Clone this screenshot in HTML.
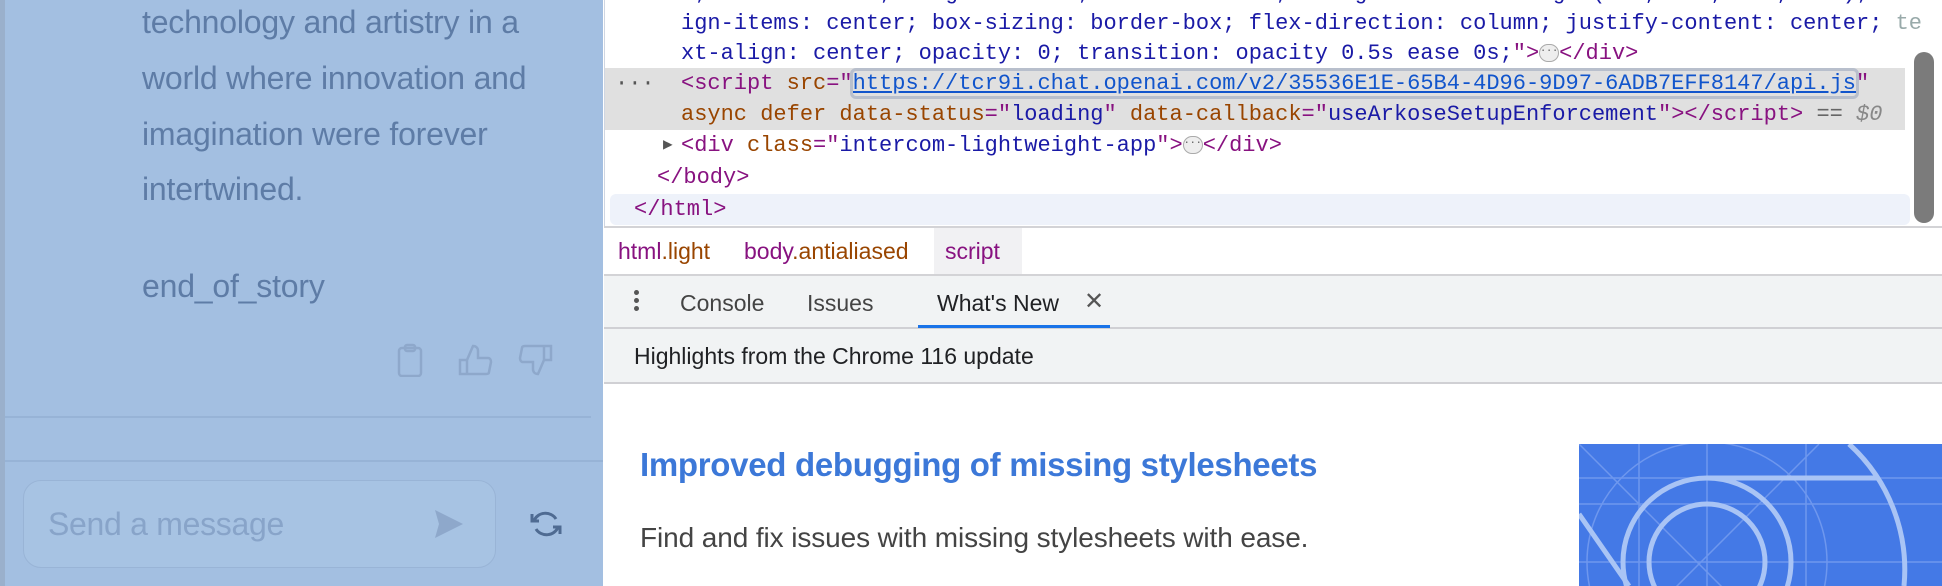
<!DOCTYPE html>
<html><head><meta charset="utf-8"><style>
*{margin:0;padding:0;box-sizing:border-box}
html,body{width:1942px;height:586px;overflow:hidden}
body{position:relative;background:#fff;font-family:"Liberation Sans",sans-serif}
.left{position:absolute;left:0;top:0;width:603px;height:586px;background:#a3bfe1;border-left:5px solid #9ab0cc;overflow:hidden}
.lt{position:absolute;left:142px;font-size:32px;color:#5e7ca6;letter-spacing:-0.2px;line-height:38px}
.code{position:absolute;left:604px;top:0;width:1338px;height:226px;background:#fff;border-left:1px solid #cfd6e2;font-family:"Liberation Mono",monospace;font-size:22px;white-space:pre;overflow:hidden}
.ln{position:absolute;height:31px;line-height:31px}
.t{color:#881280}.a{color:#994500}.v{color:#1a1aa6}.k{color:#1155cc;text-decoration:underline}
.dots{display:inline-block;width:20px;height:18px;border:1px solid #aaa;border-radius:9px;background:#eee;vertical-align:middle;font-size:10px;line-height:14px;text-align:center;color:#555}
.abs{position:absolute}
</style></head><body>
<div class="left">
<div class="lt" style="top:3px;left:137px">technology and artistry in a</div>
<div class="lt" style="top:59px;left:137px">world where innovation and</div>
<div class="lt" style="top:115px;left:137px">imagination were forever</div>
<div class="lt" style="top:170px;left:137px">intertwined.</div>
<div class="lt" style="top:267px;left:137px">end_of_story</div>
<svg class="abs" style="left:390px;top:343px" width="160" height="34" fill="none" stroke="#8ea8cb" stroke-width="2.5">
<rect x="4" y="5" width="22" height="28" rx="3"/><rect x="10" y="2" width="10" height="6" rx="2"/>
<path d="M65 17h7v14h-7zM72 17l6-14c3 0 5 2 5 5v7h10c2 0 3 2 3 4l-2 10c0 2-2 2-3 2H72"/>
<path d="M149 17h7V3h-7zM149 17l-6 14c-3 0-5-2-5-5v-7h-10c-2 0-3-2-3-4l2-10c0-2 2-2 3-2h19"/>
</svg>
<div class="abs" style="left:-5px;top:416px;width:591px;height:2px;background:#97b3d6"></div>
<div class="abs" style="left:-5px;top:460px;width:603px;height:2px;background:#97b3d6"></div>
<div class="abs" style="left:18px;top:480px;width:473px;height:88px;border:1px solid #99b4d6;border-radius:18px;background:#a7c3e3"></div>
<div class="abs" style="left:43px;top:506px;font-size:32px;color:#88a4c9;letter-spacing:-0.3px">Send a message</div>
<svg class="abs" style="left:428px;top:508px" width="32" height="32"><path d="M2 2L30 16L2 30L6 16Z" fill="#8ea8cb"/></svg>
<svg class="abs" style="left:524px;top:508px" width="34" height="32" fill="none" stroke="#4f6b92" stroke-width="3"><path d="M5 13a12 11 0 0 1 22-2M29 19a12 11 0 0 1-22 2M3 6v7h7M31 26v-7h-7"/></svg>
</div>
<div class="code">
<div class="ln" style="top:-22px;left:76px;color:#1a1aa6">x; width: 100vw; height: 100vh; z-index: 1000; background-color: rgba(255, 255, 255, 0.5); di</div>
<div class="ln" style="top:8px;left:76px;color:#1a1aa6">ign-items: center; box-sizing: border-box; flex-direction: column; justify-content: center; <span style="color:#9aa">te</span></div>
<div class="ln" style="top:38px;left:76px"><span class="v">xt-align: center; opacity: 0; transition: opacity 0.5s ease 0s;</span><span class="t">"&gt;</span><span class="dots">···</span><span class="t">&lt;/div&gt;</span></div>
<div class="abs" style="left:0;top:68px;width:1300px;height:62px;background:#e0e0e0"></div>
<div class="ln" style="top:68px;left:10px;color:#555">···</div>
<div class="ln" style="top:68px;left:76px"><span class="t">&lt;script</span> <span class="a">src</span><span class="t">="</span><span class="k" style="outline:3px solid #b8bfcc;border-radius:3px">https://tcr9i.chat.openai.com/v2/35536E1E-65B4-4D96-9D97-6ADB7EFF8147/api.js</span><span class="t">"</span></div>
<div class="ln" style="top:99px;left:76px"><span class="a">async defer data-status</span><span class="t">="</span><span class="v">loading</span><span class="t">"</span> <span class="a">data-callback</span><span class="t">="</span><span class="v">useArkoseSetupEnforcement</span><span class="t">"&gt;&lt;/script&gt;</span> <span style="color:#666">==</span> <i style="color:#888">$0</i></div>
<div class="ln" style="top:130px;left:58px;color:#555;font-size:16px">▶</div>
<div class="ln" style="top:130px;left:76px"><span class="t">&lt;div</span> <span class="a">class</span><span class="t">="</span><span class="v">intercom-lightweight-app</span><span class="t">"&gt;</span><span class="dots">···</span><span class="t">&lt;/div&gt;</span></div>
<div class="ln" style="top:162px;left:52px"><span class="t">&lt;/body&gt;</span></div>
<div class="abs" style="left:5px;top:194px;width:1300px;height:31px;background:#eef2fa;border-radius:6px"></div>
<div class="ln" style="top:194px;left:29px"><span class="t">&lt;/html&gt;</span></div>
<div class="abs" style="left:1309px;top:52px;width:20px;height:171px;background:#7b7b7b;border-radius:10px"></div>
</div>
<div class="abs" style="left:604px;top:226px;width:1338px;height:48px;border-top:2px solid #d3d3d6;background:#fff;font-size:23px;line-height:46px">
<span class="abs" style="left:14px;color:#881280">html<span style="color:#994500">.light</span></span>
<span class="abs" style="left:140px;color:#881280">body<span style="color:#994500">.antialiased</span></span>
<span class="abs" style="left:330px;width:88px;height:46px;background:#f1f1f3"></span>
<span class="abs" style="left:341px;color:#881280">script</span>
</div>
<div class="abs" style="left:604px;top:274px;width:1338px;height:55px;background:#f1f3f4;border-top:2px solid #d3d3d6;border-bottom:2px solid #d0d0d4;font-size:23px">
<div class="abs" style="left:30px;top:14px;width:5px;height:5px;border-radius:3px;background:#555;box-shadow:0 8px 0 #555,0 16px 0 #555"></div>
<span class="abs" style="left:76px;top:14px;color:#444">Console</span>
<span class="abs" style="left:203px;top:14px;color:#444">Issues</span>
<span class="abs" style="left:333px;top:14px;color:#202124">What's New</span>
<span class="abs" style="left:480px;top:11px;color:#555;font-size:24px">✕</span>
<div class="abs" style="left:314px;top:49px;width:192px;height:3px;background:#1a73e8"></div>
</div>
<div class="abs" style="left:604px;top:329px;width:1338px;height:55px;background:#f1f3f4;border-bottom:2px solid #d0d0d4">
<span class="abs" style="left:30px;top:14px;font-size:23px;color:#202124">Highlights from the Chrome 116 update</span>
</div>
<div class="abs" style="left:640px;top:446px;font-size:33px;font-weight:bold;color:#3c78d8;letter-spacing:-0.3px">Improved debugging of missing stylesheets</div>
<div class="abs" style="left:640px;top:522px;font-size:28px;color:#444;letter-spacing:-0.1px">Find and fix issues with missing stylesheets with ease.</div>
<svg class="abs" style="left:1579px;top:444px" width="363" height="142">
<rect width="363" height="142" fill="#4479e6"/>
<g stroke="#6e97ee" stroke-width="1.5" fill="none"><path d="M0 34H363M0 60H363M0 118H363M60 0V142M128 0V142M227 0V142"/><path d="M0 0L200 200M240 0L60 180"/><circle cx="128" cy="118" r="120"/></g>
<g stroke="#a9c4f5" stroke-width="5" fill="none"><circle cx="128" cy="118" r="58"/><circle cx="128" cy="118" r="84"/><path d="M128 34H300M270 0A170 170 0 0 1 325 142M0 70L50 142"/></g>
</svg>
</body></html>
